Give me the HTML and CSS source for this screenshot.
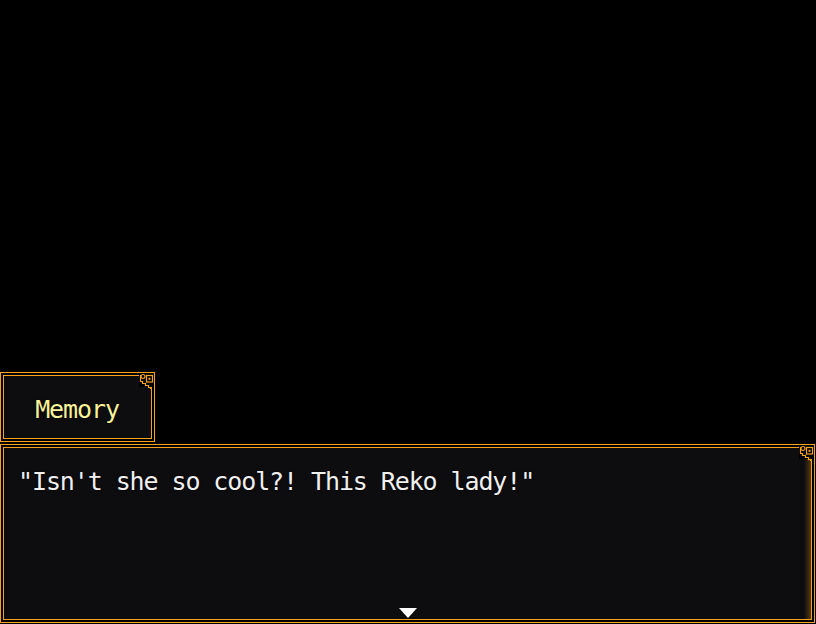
FILE: index.html
```html
<!DOCTYPE html>
<html>
<head>
<meta charset="utf-8">
<link rel="stylesheet" href="styles.css">
</head>
<body>
<div class="screen">
  <div class="window name-window">
    <div class="inner name-inner">
      <span class="name-text">Memory</span>
    </div>
    <svg class="ornament" width="16" height="17" viewBox="0 0 16 17">
      <rect x="0" y="1" width="14" height="14" fill="#000"/>
      <circle cx="4" cy="4.5" r="2" fill="none" stroke="#f5a21c" stroke-width="1.2"/>
      <rect x="7.5" y="3.5" width="6" height="6.5" fill="none" stroke="#f5a21c" stroke-width="1.2"/>
      <rect x="9.5" y="5.8" width="2" height="2" fill="#f5a21c"/>
      <path d="M1.5 3 V9.5 H3.5 V11.5 H6.5 V13.5 H9.5 V15.5 H11.5 V17" fill="none" stroke="#f5a21c" stroke-width="1.2"/>
    </svg>
  </div>
  <div class="window msg-window">
    <div class="inner msg-inner">
      <p class="msg-text">"Isn't she so cool?! This Reko lady!"</p>
    </div>
    <svg class="ornament" width="16" height="17" viewBox="0 0 16 17">
      <rect x="0" y="1" width="14" height="14" fill="#000"/>
      <circle cx="4" cy="4.5" r="2" fill="none" stroke="#f5a21c" stroke-width="1.2"/>
      <rect x="7.5" y="3.5" width="6" height="6.5" fill="none" stroke="#f5a21c" stroke-width="1.2"/>
      <rect x="9.5" y="5.8" width="2" height="2" fill="#f5a21c"/>
      <path d="M1.5 3 V9.5 H3.5 V11.5 H6.5 V13.5 H9.5 V15.5 H11.5 V17" fill="none" stroke="#f5a21c" stroke-width="1.2"/>
    </svg>
    <svg class="pause-arrow" width="18" height="10" viewBox="0 0 18 10">
      <polygon points="0,0 18,0 9,10" fill="#ffffff"/>
    </svg>
  </div>
</div>
</body>
</html>
```

FILE: styles.css
```css
html, body {
  margin: 0;
  padding: 0;
  background: #000;
}

.screen {
  width: 816px;
  height: 624px;
  display: flex;
  flex-direction: column;
  justify-content: flex-end;
  align-items: flex-start;
  gap: 2px;
  padding-bottom: 1px;
  box-sizing: border-box;
  background: #000;
  font-family: "DejaVu Sans Mono", "Liberation Mono", monospace;
}

.window {
  position: relative;
  box-sizing: border-box;
  border: 1px solid #f5a21c;
  padding: 2px;
  background: #000;
  display: flex;
}

.inner {
  flex: 1;
  box-sizing: border-box;
  border: 1px solid #f5a21c;
  background: #0d0d10;
}

.name-window {
  width: 155px;
  height: 70px;
}

.name-inner {
  display: flex;
  align-items: center;
  justify-content: center;
}

.name-text {
  color: #fbf29a;
  font-size: 25px;
  letter-spacing: -1.1px;
  line-height: 1;
  padding-top: 4px;
  padding-right: 1px;
  text-shadow: 0 0 2px #000;
}

.msg-window {
  width: 815px;
  height: 179px;
}

.msg-inner {
  background: linear-gradient(to left, rgba(200, 120, 20, 0.4) 0, rgba(200, 120, 20, 0) 7px), #0d0d10;
  padding: 18px 14px;
}

.msg-text {
  margin: 0;
  color: #f0f0f0;
  font-size: 25px;
  letter-spacing: -1.1px;
  line-height: 32px;
  white-space: pre;
  text-shadow: 0 0 2px #000;
}

.ornament {
  position: absolute;
  top: -1px;
  right: -1px;
  display: block;
}

.pause-arrow {
  position: absolute;
  left: 398px;
  bottom: 4px;
  display: block;
}
```
